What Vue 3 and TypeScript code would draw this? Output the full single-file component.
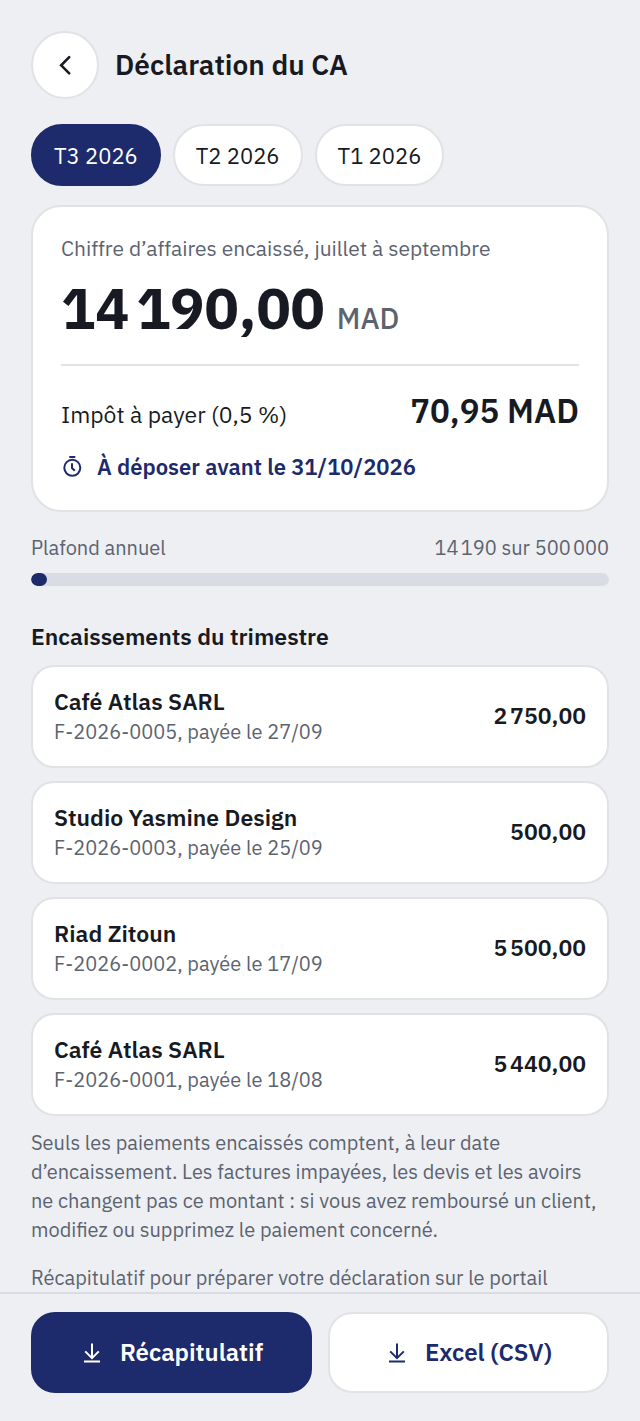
<script setup lang="ts">
import { ref } from 'vue'

interface Payment {
  client: string
  reference: string
  date: string
  amount: string
}

const quarters = ['T3 2026', 'T2 2026', 'T1 2026']
const selected = ref('T3 2026')

const collected = 14190
const ceiling = 500000
const progress = `${(collected / ceiling) * 100}%`

const payments: Payment[] = [
  { client: 'Café Atlas SARL', reference: 'F-2026-0005', date: '27/09', amount: '2\u202F750,00' },
  { client: 'Studio Yasmine Design', reference: 'F-2026-0003', date: '25/09', amount: '500,00' },
  { client: 'Riad Zitoun', reference: 'F-2026-0002', date: '17/09', amount: '5\u202F500,00' },
  { client: 'Café Atlas SARL', reference: 'F-2026-0001', date: '18/08', amount: '5\u202F440,00' },
]
</script>

<template>
  <div class="screen">
    <main class="content">
      <header class="header">
        <button class="back" type="button" aria-label="Retour">
          <svg viewBox="0 0 24 24" width="24" height="24" aria-hidden="true">
            <path d="M16.2 4.2L8.2 12.3L16.2 20.4" fill="none" stroke="currentColor" stroke-width="2.6" stroke-linecap="round" stroke-linejoin="miter" />
          </svg>
        </button>
        <h1 class="title">Déclaration du CA</h1>
      </header>

      <nav class="quarters" aria-label="Trimestre">
        <button
          v-for="quarter in quarters"
          :key="quarter"
          type="button"
          class="pill"
          :class="{ active: quarter === selected }"
          :aria-pressed="quarter === selected"
          @click="selected = quarter"
        >
          {{ quarter }}
        </button>
      </nav>

      <section class="summary">
        <p class="label">Chiffre d’affaires encaissé, juillet à septembre</p>
        <p class="total">
          <strong class="total-value">14&#8239;190,00</strong>
          <span class="currency">MAD</span>
        </p>
        <div class="tax">
          <span class="tax-label">Impôt à payer (0,5 %)</span>
          <strong class="tax-value">70,95 MAD</strong>
        </div>
        <p class="deadline">
          <svg viewBox="0 0 24 24" width="24" height="24" aria-hidden="true">
            <g fill="none" stroke="currentColor" stroke-width="2">
              <circle cx="11.3" cy="12.8" r="8" />
              <path d="M8.3 2H14.3" />
              <path d="M11 8.2V13L13.8 15.8" />
            </g>
          </svg>
          <span>À déposer avant le 31/10/2026</span>
        </p>
      </section>

      <section class="ceiling">
        <div class="ceiling-row">
          <span id="ceiling-label">Plafond annuel</span>
          <span>14&#8239;190 sur 500&#8239;000</span>
        </div>
        <div
          class="track"
          role="progressbar"
          aria-labelledby="ceiling-label"
          :aria-valuenow="collected"
          aria-valuemin="0"
          :aria-valuemax="ceiling"
        >
          <div class="bar" :style="{ width: progress }"></div>
        </div>
      </section>

      <h2 class="subtitle">Encaissements du trimestre</h2>
      <ul class="payments">
        <li v-for="payment in payments" :key="payment.reference" class="payment">
          <div class="who">
            <span class="client">{{ payment.client }}</span>
            <span class="detail">{{ payment.reference }}, payée le {{ payment.date }}</span>
          </div>
          <strong class="amount">{{ payment.amount }}</strong>
        </li>
      </ul>

      <p class="note">
        Seuls les paiements encaissés comptent, à leur date d’encaissement. Les factures impayées, les devis et les avoirs ne changent pas ce montant&nbsp;: si vous avez remboursé un client, modifiez ou supprimez le paiement concerné.
      </p>
      <p class="note">Récapitulatif pour préparer votre déclaration sur le portail</p>
    </main>

    <footer class="actions">
      <button type="button" class="action primary">
        <svg viewBox="0 0 24 24" width="24" height="24" aria-hidden="true">
          <path d="M12 2.5V17M5.2 10.4L12 17.2L18.8 10.4M4 20.5H20" fill="none" stroke="currentColor" stroke-width="2" />
        </svg>
        <span>Récapitulatif</span>
      </button>
      <button type="button" class="action">
        <svg viewBox="0 0 24 24" width="24" height="24" aria-hidden="true">
          <path d="M12 2.5V17M5.2 10.4L12 17.2L18.8 10.4M4 20.5H20" fill="none" stroke="currentColor" stroke-width="2" />
        </svg>
        <span>Excel (CSV)</span>
      </button>
    </footer>
  </div>
</template>

<style>
body {
  margin: 0;
  background: #edeff3;
}
</style>

<style scoped>
.screen {
  display: flex;
  flex-direction: column;
  height: 100vh;
  background: #edeff3;
  color: #171a22;
  font-family: "IBM Plex Sans", "Noto Sans", sans-serif;
  font-size: 20px;
  line-height: 29px;
}
.screen * {
  box-sizing: border-box;
}
h1, h2, p, ul {
  margin: 0;
  padding: 0;
}
button {
  font: inherit;
  color: inherit;
  padding: 0;
  cursor: pointer;
}
svg {
  flex: none;
}
.content {
  flex: 1;
  min-height: 0;
  overflow-y: auto;
  scrollbar-width: none;
  padding: 31px 31px 0;
}
.header {
  display: flex;
  align-items: center;
  gap: 16px;
}
.back {
  display: grid;
  place-items: center;
  width: 68px;
  height: 68px;
  border: 2px solid #e0e2e6;
  border-radius: 50%;
  background: #fff;
}
.title {
  font-size: 28px;
  line-height: 36px;
  font-weight: 600;
}
.quarters {
  display: flex;
  gap: 12px;
  margin-top: 25px;
}
.pill {
  height: 62px;
  padding: 0 21px;
  border: 2px solid #e0e2e6;
  border-radius: 31px;
  background: #fff;
  font-size: 22px;
}
.pill.active {
  border-color: #1d2a6b;
  background: #1d2a6b;
  color: #fff;
}
.summary {
  margin-top: 19px;
  padding: 27px 28px;
  border: 2px solid #e0e2e6;
  border-radius: 30px;
  background: #fff;
}
.label {
  color: #5c6370;
  font-size: 21px;
}
.total {
  display: flex;
  align-items: baseline;
  gap: 12px;
  padding: 12px 0 23px;
  border-bottom: 2px solid #e0e2e6;
}
.total-value {
  font-size: 57px;
  line-height: 66px;
  font-weight: 700;
}
.currency {
  color: #5c6370;
  font-size: 29px;
  font-weight: 500;
}
.tax {
  display: flex;
  align-items: baseline;
  justify-content: space-between;
  margin-top: 23px;
}
.tax-label {
  font-size: 23px;
}
.tax-value {
  font-size: 33px;
  line-height: 44px;
  font-weight: 600;
}
.deadline {
  display: flex;
  align-items: center;
  gap: 12px;
  margin-top: 18px;
  color: #1d2a6b;
  font-size: 22px;
  line-height: 32px;
  font-weight: 600;
}
.ceiling {
  margin-top: 21px;
}
.ceiling-row {
  display: flex;
  justify-content: space-between;
  color: #5c6370;
}
.track {
  height: 13px;
  margin-top: 11px;
  border-radius: 7px;
  background: #d9dce3;
  overflow: hidden;
}
.bar {
  height: 100%;
  border-radius: 7px;
  background: #1d2a6b;
}
.subtitle {
  margin-top: 34px;
  font-size: 23px;
  line-height: 32px;
  font-weight: 600;
}
.payments {
  display: grid;
  gap: 13px;
  margin: 13px 0 12px;
  list-style: none;
}
.payment {
  display: flex;
  align-items: center;
  justify-content: space-between;
  padding: 18px 21px 20px;
  border: 2px solid #e0e2e6;
  border-radius: 23px;
  background: #fff;
}
.who {
  display: grid;
}
.client {
  font-size: 23px;
  line-height: 32px;
  font-weight: 600;
}
.detail {
  color: #5c6370;
}
.amount {
  font-size: 23px;
  font-weight: 600;
}
.note {
  margin-bottom: 19px;
  padding-right: 4px;
  color: #5c6370;
}
.actions {
  display: flex;
  gap: 16px;
  padding: 18px 31px 28px;
  border-top: 2px solid #d9dce2;
}
.action {
  display: flex;
  flex: 1;
  align-items: center;
  justify-content: center;
  gap: 16px;
  height: 81px;
  border: 2px solid #e0e2e6;
  border-radius: 24px;
  background: #fff;
  color: #1d2a6b;
  font-size: 24px;
  font-weight: 600;
}
.action.primary {
  border-color: #1d2a6b;
  background: #1d2a6b;
  color: #fff;
}
</style>
